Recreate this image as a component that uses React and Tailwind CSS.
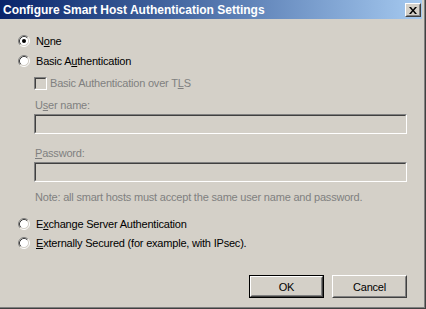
import React, { useState } from 'react';

const Radio = ({ checked }) => (
  <svg width="12" height="12" viewBox="0 0 12 12" className="shrink-0">
    <circle cx="6" cy="6" r="4.5" fill="#ffffff" />
    <path d="M2.11 9.89 A5.5 5.5 0 0 1 9.89 2.11" fill="none" stroke="#808080" strokeWidth="1" />
    <path d="M9.89 2.11 A5.5 5.5 0 0 1 2.11 9.89" fill="none" stroke="#ffffff" strokeWidth="1" />
    <path d="M2.82 9.18 A4.5 4.5 0 0 1 9.18 2.82" fill="none" stroke="#404040" strokeWidth="1" />
    <path d="M9.18 2.82 A4.5 4.5 0 0 1 2.82 9.18" fill="none" stroke="#d4d0c8" strokeWidth="1" />
    {checked && <circle cx="6" cy="6" r="2" fill="#000000" />}
  </svg>
);

// sunken 3D frame, used for the checkbox and the text boxes
const Sunken = ({ className, children }) => (
  <div className={`border border-t-[#808080] border-l-[#808080] border-r-white border-b-white ${className}`}>
    <div className="w-full h-full border border-t-[#404040] border-l-[#404040] border-r-[#d4d0c8] border-b-[#d4d0c8] bg-[#d4d0c8]">
      {children}
    </div>
  </div>
);

const Raised = ({ className, children }) => (
  <div className={`border border-t-white border-l-white border-r-[#404040] border-b-[#404040] bg-[#d4d0c8] ${className}`}>
    <div className="w-full h-full border border-t-[#d4d0c8] border-l-[#d4d0c8] border-r-[#808080] border-b-[#808080] flex items-center justify-center">
      {children}
    </div>
  </div>
);

const RadioRow = ({ checked, onClick, children, className = '' }) => (
  <div className={`h-[18px] flex items-center gap-[6px] cursor-default ${className}`} onClick={onClick}>
    <Radio checked={checked} />
    <span className="text-black">{children}</span>
  </div>
);

const App = () => {
  const [mode, setMode] = useState('none');

  return (
    <div
      className="w-[426px] h-[309px] border-r border-b border-[#404040] text-[11px] leading-[14px] tracking-[-0.2px]"
      style={{ fontFamily: '"Liberation Sans", Arial, sans-serif' }}
    >
      <div className="w-full h-full border-r border-b border-[#808080]">
        <div className="w-full h-full pr-[2px] pb-[2px] bg-[#d4d0c8] flex flex-col">
          {/* title bar */}
          <div className="h-[19px] shrink-0 flex items-start justify-between bg-gradient-to-r from-[#0a246a] to-[#a6caf0]">
            <span className="pl-[3px] pt-[3px] text-white font-bold text-[12px] leading-[14px] tracking-normal">
              Configure Smart Host Authentication Settings
            </span>
            <Raised className="w-[16px] h-[14px] mt-[3px] mr-[1px]">
              <svg width="8" height="7" viewBox="0 0 8 7">
                <path d="M0 0h2l2 2.5L6 0h2L5 3.5 8 7H6L4 4.5 2 7H0l3-3.5z" fill="#000000" />
              </svg>
            </Raised>
          </div>

          {/* client area */}
          <div className="flex-1 flex flex-col pl-[18px] pr-[15px]">
            <RadioRow className="mt-[13px]" checked={mode === 'none'} onClick={() => setMode('none')}>
              N<span className="underline">o</span>ne
            </RadioRow>
            <RadioRow className="mt-[2px]" checked={mode === 'basic'} onClick={() => setMode('basic')}>
              Basic A<span className="underline">u</span>thentication
            </RadioRow>

            <div className="mt-[4px] ml-[16px] h-[18px] flex items-center gap-[3px]">
              <Sunken className="w-[13px] h-[13px] shrink-0" />
              <span className="text-[#808080]">
                Basic Authentication over T<span className="underline">L</span>S
              </span>
            </div>

            <div className="mt-[6px] ml-[17px] h-[14px] text-[#808080]">
              U<span className="underline">s</span>er name:
            </div>
            <Sunken className="mt-[2px] ml-[16px] h-[20px]" />

            <div className="mt-[12px] ml-[17px] h-[14px] text-[#808080]">
              <span className="underline">P</span>assword:
            </div>
            <Sunken className="mt-[2px] ml-[16px] h-[20px]" />

            <div className="mt-[8px] ml-[17px] h-[14px] text-[#808080]">
              Note: all smart hosts must accept the same user name and password.
            </div>

            <RadioRow className="mt-[11px]" checked={mode === 'exchange'} onClick={() => setMode('exchange')}>
              E<span className="underline">x</span>change Server Authentication
            </RadioRow>
            <RadioRow className="mt-[1px]" checked={mode === 'external'} onClick={() => setMode('external')}>
              <span className="underline">E</span>xternally Secured (for example, with IPsec).
            </RadioRow>

            <div className="mt-[23px] flex justify-end gap-[8px]">
              <div className="w-[75px] h-[23px] border border-black">
                <Raised className="w-full h-full">
                  <span className="text-black">OK</span>
                </Raised>
              </div>
              <Raised className="w-[75px] h-[23px]">
                <span className="text-black">Cancel</span>
              </Raised>
            </div>
          </div>
        </div>
      </div>
    </div>
  );
};

export default App;
